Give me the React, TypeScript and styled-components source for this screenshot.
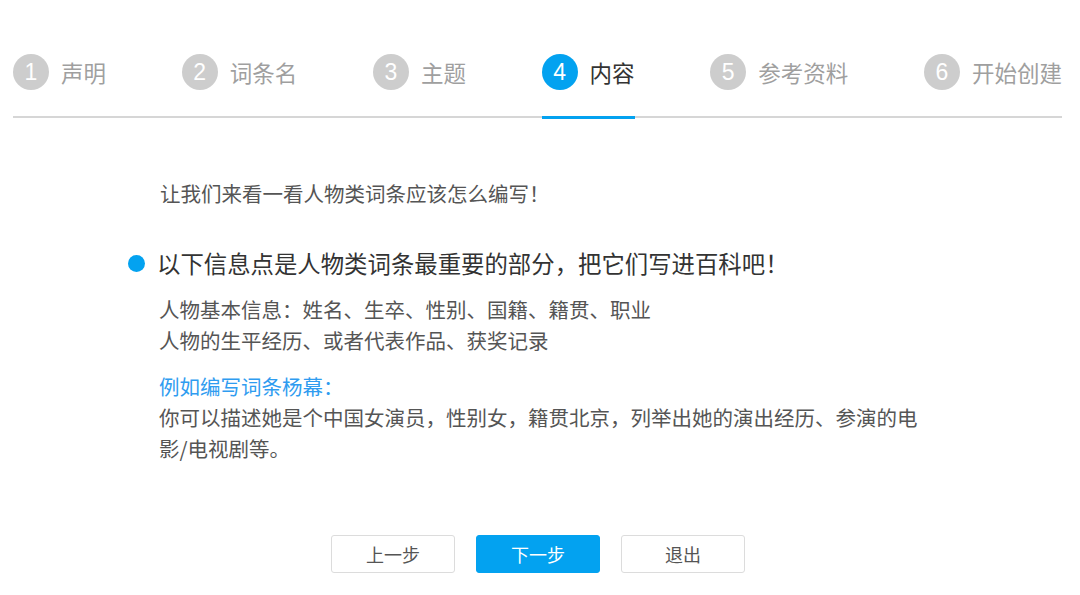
import React from "react";
import styled, { createGlobalStyle, css } from "styled-components";

const Global = createGlobalStyle`
  html, body { margin: 0; padding: 0; background: #fff; }
  body { font-family: "Noto Sans CJK SC", "Noto Sans", sans-serif; }
  * { box-sizing: border-box; }
`;

const BLUE = "#03a2f0";

const Page = styled.div`
  width: 1080px;
  height: 595px;
  overflow: hidden;
  background: #fff;
`;

const Nav = styled.nav`
  display: flex;
  justify-content: space-between;
  margin: 0 18px 0 13px;
  padding-top: 54px;
  border-bottom: 2px solid #d6d6d6;
`;

const Step = styled.div<{ $active?: boolean }>`
  position: relative;
  display: flex;
  align-items: center;
  gap: 12px;
  padding-bottom: 26px;
  ${(p) =>
    p.$active &&
    css`
      &::after {
        content: "";
        position: absolute;
        left: 0;
        right: 0;
        bottom: -3px;
        height: 3px;
        background: ${BLUE};
      }
    `}
`;

const Circle = styled.span<{ $active?: boolean }>`
  width: 36px;
  height: 36px;
  border-radius: 50%;
  background: ${(p) => (p.$active ? BLUE : "#cdcdcd")};
  color: #fff;
  display: flex;
  align-items: center;
  justify-content: center;
  font-family: "Liberation Sans", Arial, sans-serif;
  font-size: 23px;
  line-height: 1;
`;

const Label = styled.span<{ $active?: boolean }>`
  font-size: 22.5px;
  line-height: 1;
  color: ${(p) => (p.$active ? "#333" : "#9f9f9f")};
`;

const Content = styled.section`
  padding-left: 159px;
  width: 930px;
`;

const Intro = styled.p`
  margin: 60px 0 0 1px;
  font-size: 20.5px;
  line-height: 30px;
  color: #555;
`;

const Heading = styled.h2`
  display: flex;
  align-items: center;
  gap: 12px;
  margin: 39px 0 0 -31px;
  font-size: 23.4px;
  font-weight: 400;
  line-height: 32px;
  color: #333;
`;

const Dot = styled.span`
  width: 17px;
  height: 17px;
  border-radius: 50%;
  background: ${BLUE};
  flex: none;
`;

const Para = styled.p<{ $gap?: number }>`
  margin: ${(p) => p.$gap ?? 15}px 0 0;
  font-size: 20.5px;
  line-height: 31px;
  color: #555;
  width: 770px;
`;

const Example = styled.span`
  display: block;
  color: #2f9cf0;
`;

const Actions = styled.div`
  display: flex;
  justify-content: center;
  gap: 21px;
  margin: 71px 0 0 -4px;
`;

const Button = styled.button<{ $primary?: boolean }>`
  width: 124px;
  height: 38px;
  border-radius: 3px;
  border: 1px solid ${(p) => (p.$primary ? BLUE : "#dcdcdc")};
  background: ${(p) => (p.$primary ? BLUE : "#fff")};
  color: ${(p) => (p.$primary ? "#fff" : "#555")};
  font-family: "Noto Sans CJK SC", sans-serif;
  font-size: 18px;
  line-height: 1;
  padding: 0;
  cursor: pointer;
`;

const steps = ["声明", "词条名", "主题", "内容", "参考资料", "开始创建"];

export default function App() {
  return (
    <Page>
      <Global />
      <Nav>
        {steps.map((s, i) => {
          const active = i === 3;
          return (
            <Step key={s} $active={active}>
              <Circle $active={active}>{i + 1}</Circle>
              <Label $active={active}>{s}</Label>
            </Step>
          );
        })}
      </Nav>
      <Content>
        <Intro>让我们来看一看人物类词条应该怎么编写！</Intro>
        <Heading>
          <Dot />
          以下信息点是人物类词条最重要的部分，把它们写进百科吧！
        </Heading>
        <Para>
          人物基本信息：姓名、生卒、性别、国籍、籍贯、职业
          <br />
          人物的生平经历、或者代表作品、获奖记录
        </Para>
        <Para>
          <Example>例如编写词条杨幕：</Example>
          你可以描述她是个中国女演员，性别女，籍贯北京，列举出她的演出经历、参演的电影/电视剧等。
        </Para>
      </Content>
      <Actions>
        <Button>上一步</Button>
        <Button $primary>下一步</Button>
        <Button>退出</Button>
      </Actions>
    </Page>
  );
}
